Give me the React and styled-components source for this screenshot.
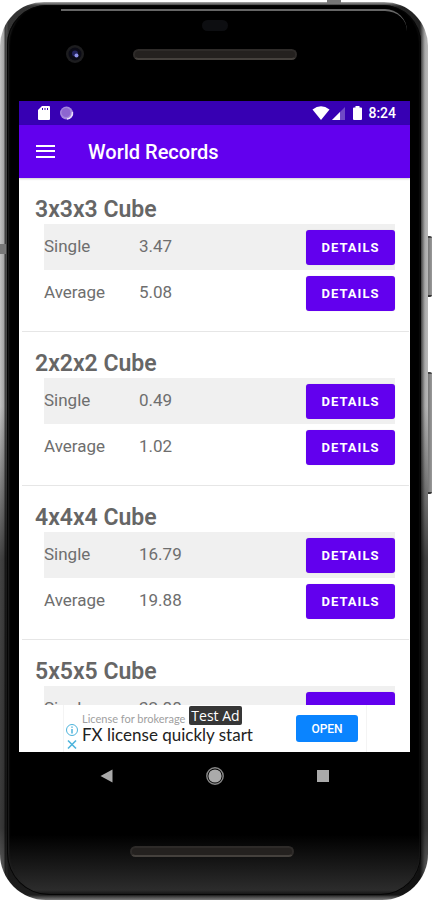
import React from 'react';
import styled, {createGlobalStyle} from 'styled-components';

const GlobalStyle = createGlobalStyle`
  * {
    box-sizing: border-box;
  }
  body {
    margin: 0;
    background-color: white;
    font-family: Roboto, "Liberation Sans", sans-serif;
  }
`

const Stage = styled.div`
  display: flex;
  height: 100vh;
  padding: 2px 4px 0 0;
`

const Phone = styled.div`
  position: relative;
  flex: 1;
  min-width: 0;
  display: flex;
  flex-direction: column;
  padding: 3px 7px 5px;
  border-radius: 44px 44px 46px 46px;
  background:
    linear-gradient(to bottom, #a8a8a8 0, #444 3px, transparent 5px, transparent calc(100% - 5px), #333 calc(100% - 4px), #7c7c7c 100%),
    linear-gradient(to bottom, transparent 45%, rgba(0, 0, 0, 0.65) 62%, rgba(0, 0, 0, 0.7) 92%, rgba(0, 0, 0, 0.4) 100%),
    linear-gradient(to right, #c2c2c2 0, #a6a6a6 4px, #3a3a3a 5px, #4e4e4e 7px, #333 8px, #222 calc(100% - 8px), #777 calc(100% - 5px), #a9a9a9 calc(100% - 3px), #b8b8b8 100%);
`

const SideKey = styled.span`
  position: absolute;
  left: 100%;
  top: ${({$top}) => $top}px;
  width: 4px;
  height: ${({$height}) => $height}px;
  background: linear-gradient(to right, #777, #999);
  border-top: 2px solid #444;
  border-bottom: 2px solid #333;
  border-radius: 0 2px 2px 0;
`

const Antenna = styled.span`
  position: absolute;
  top: ${({$top}) => $top}px;
  left: ${({$left}) => $left};
  right: ${({$right}) => $right};
  width: ${({$wide}) => $wide ? 14 : 6}px;
  height: ${({$wide}) => $wide ? 4 : 10}px;
  background-color: #777;
`

const Face = styled.div`
  position: relative;
  flex: 1;
  min-height: 0;
  display: flex;
  flex-direction: column;
  padding: 0 11px 0 12px;
  border-radius: 40px 38px 40px 42px;
  background: linear-gradient(to bottom, black calc(100% - 60px), #2c2c2c calc(100% - 5px), #111 100%);
  box-shadow: inset 0 0 0 1px #050505, inset 5px 0 2px -3px #222, inset -4px 0 2px -3px #222;

  &::before {
    content: '';
    position: absolute;
    top: 4px;
    left: 54px;
    right: 14px;
    height: 20px;
    border-top: 2px solid #666;
    border-radius: 0 28px 0 0;
  }
`

const TopBezel = styled.div`
  flex: none;
  height: 96px;
  padding-top: 15px;
`

const Sensor = styled.div`
  width: 26px;
  height: 11px;
  margin: 0 auto 13px;
  border-radius: 6px;
  background-color: #0d0e11;
`

const BezelRow = styled.div`
  display: grid;
  grid-template-columns: 1fr auto 1fr;
  align-items: center;
`

const Camera = styled.svg`
  width: 20px;
  height: 20px;
  margin-left: 46px;
`

const Speaker = styled.div`
  width: 164px;
  height: 11px;
  border: 2px solid #2e2b29;
  border-bottom-color: #45413d;
  border-radius: 6px;
  background-color: #24211f;
`

const BottomBezel = styled.div`
  flex: none;
  height: 95px;
  padding: 46px 5px 0 0;
  display: flex;
  justify-content: center;
`

const Screen = styled.div`
  flex: 1;
  min-height: 0;
  display: flex;
  flex-direction: column;
  background-color: white;
`

const StatusBar = styled.div`
  flex: none;
  display: flex;
  align-items: center;
  height: 24px;
  padding: 0 14px 0 18px;
  background-color: #3700b3;
  color: white;
  font-size: 14px;
  font-weight: 500;
`

const StatusIcon = styled.svg`
  flex: none;
  display: block;
  width: ${({$width}) => $width}px;
  height: 16px;
  margin-right: ${({$gap}) => $gap || 0}px;
`

const Spacer = styled.div`
  flex: 1;
`

const AppBar = styled.header`
  position: relative;
  flex: none;
  display: flex;
  align-items: center;
  height: 53px;
  padding-left: 14px;
  background-color: #6200ee;
  color: white;
  box-shadow: 0 1px 2px rgba(0, 0, 0, 0.2);
`

const MenuButton = styled.button`
  display: flex;
  margin-right: 30px;
  padding: 0;
  border: 0;
  background: none;
  color: white;
`

const Title = styled.h1`
  margin: 0;
  font-size: 20px;
  font-weight: 500;
`

const List = styled.main`
  flex: 1;
  min-height: 0;
  overflow: hidden;
`

const Section = styled.section`
  margin: 0 1px 0 3px;
  padding: 18px 14px 15px 13px;
  border-bottom: 1px solid #e6e6e6;
`

const Event = styled.h2`
  margin: 0;
  font-size: 23px;
  line-height: 28px;
  font-weight: 600;
  color: #666;
`

const Records = styled.table`
  width: calc(100% - 9px);
  margin-left: 9px;
  border-collapse: collapse;
  font-size: 17px;
  line-height: 20px;
  color: #6e6e6e;
`

const Record = styled.tr`
  height: 46px;
  background-color: ${({$shaded}) => $shaded ? '#f0f0f0' : 'transparent'};
`

const Kind = styled.th`
  width: 95px;
  padding: 0 0 2px;
  font-weight: 400;
  text-align: left;
`

const Value = styled.td`
  padding: 0 0 2px;
`

const Action = styled.td`
  padding: 0;
  text-align: right;
`

const DetailsButton = styled.button`
  display: block;
  width: 89px;
  height: 35px;
  margin-left: auto;
  padding: 0;
  border: 0;
  border-radius: 3px;
  background-color: #6200ee;
  color: white;
  font-family: inherit;
  font-size: 13px;
  font-weight: 700;
  letter-spacing: 1px;
  box-shadow: 0 0 1px rgba(0, 0, 0, 0.2);
`

const AdBar = styled.aside`
  flex: none;
  height: 47px;
  padding: 0 43px 0 44px;
  background-color: white;
`

const Ad = styled.div`
  display: flex;
  align-items: center;
  height: 100%;
  padding-right: 8px;
  border: 1px solid #f4f4f4;
  border-width: 0 1px;
`

const AdChoices = styled.div`
  align-self: flex-end;
  display: flex;
  flex-direction: column;
  flex: none;
  width: 18px;
  padding-left: 1px;
`

const AdText = styled.div`
  flex: 1;
  min-width: 0;
  align-self: flex-start;
  white-space: nowrap;
  font-family: Lato, "Liberation Sans", sans-serif;
`

const AdTop = styled.div`
  display: flex;
  align-items: flex-end;
  gap: 4px;
  padding-top: 1px;
`

const AdLead = styled.span`
  font-size: 11px;
  line-height: 12px;
  color: #a0a0a0;
`

const AdTag = styled.span`
  padding: 0 2px;
  border-radius: 2px;
  background-color: #363636;
  color: white;
  font-family: "Open Sans", sans-serif;
  font-size: 14px;
  line-height: 19px;
`

const AdHeadline = styled.div`
  font-size: 17px;
  line-height: 20px;
  color: #222;
`

const OpenButton = styled.button`
  flex: none;
  width: 62px;
  height: 27px;
  padding: 0;
  border: 0;
  border-radius: 3px;
  background-color: #0a84ff;
  color: white;
  font-family: Roboto, sans-serif;
  font-size: 12px;
  font-weight: 500;
`

const NavBar = styled.nav`
  flex: none;
  display: grid;
  grid-template-columns: repeat(3, 1fr);
  height: 48px;
  padding: 0 33px 0 34px;
  background-color: black;
`

const NavButton = styled.button`
  display: flex;
  align-items: center;
  justify-content: center;
  padding: 0;
  border: 0;
  background: none;
`

const events = [
    {name: '3x3x3 Cube', single: '3.47', average: '5.08'},
    {name: '2x2x2 Cube', single: '0.49', average: '1.02'},
    {name: '4x4x4 Cube', single: '16.79', average: '19.88'},
    {name: '5x5x5 Cube', single: '32.88', average: '39.65'},
]

const RecordRow = ({kind, value, shaded}) => (
    <Record $shaded={shaded}>
        <Kind scope="row">{kind}</Kind>
        <Value>{value}</Value>
        <Action><DetailsButton type="button">DETAILS</DetailsButton></Action>
    </Record>
)

const Status = () => (
    <StatusBar>
        <StatusIcon $width={14} $gap={8} viewBox="0 0 14 16">
            <path d="M5 1h7q1 0 1 1v12q0 1-1 1H2q-1 0-1-1V5z" fill="#fff"/>
            <path d="M5.5 3v2M8 3v2M10.5 3v2" stroke="#3700b3"/>
        </StatusIcon>
        <StatusIcon $width={16} viewBox="0 0 16 16">
            <circle cx="7.5" cy="8" r="6.5" fill="#a487dc"/>
            <circle cx="7" cy="7.5" r="4.5" fill="#8d66d0"/>
            <path d="M13.4 7a6 6 0 0 1-5.4 7" fill="none" stroke="#e8defa" strokeWidth="1.6"/>
        </StatusIcon>
        <Spacer/>
        <StatusIcon $width={18} $gap={2} viewBox="0 0 18 16">
            <path d="M9 15 0.5 4.5Q9-2 17.5 4.5z" fill="#fff"/>
        </StatusIcon>
        <StatusIcon $width={13} $gap={8} viewBox="0 0 13 16">
            <path d="M0 15 13 2v13z" fill="#6f49c6"/>
            <path d="M0 15 8 7v8z" fill="#fff"/>
        </StatusIcon>
        <StatusIcon $width={9} $gap={6} viewBox="0 0 9 16">
            <path d="M2.5 1h4v1.500H8q1 0 1 1V14q0 1-1 1H1q-1 0-1-1V3.500q0-1 1-1h1.500z" fill="#fff"/>
        </StatusIcon>
        <span>8:24</span>
    </StatusBar>
)

const AdBanner = () => (
    <AdBar>
        <Ad>
            <AdChoices>
                <svg width="14" height="15" viewBox="0 0 14 15" fill="none" stroke="#4db4dc">
                    <circle cx="7" cy="7" r="5.5"/>
                    <path d="M7 6v4.500M7 3.500v1.300" strokeWidth="1.5"/>
                </svg>
                <svg width="14" height="14" viewBox="0 0 14 14" fill="none" stroke="#4db4dc" strokeWidth="1.6">
                    <path d="m3 2.500 8 8m0-8-8 8"/>
                </svg>
            </AdChoices>
            <AdText>
                <AdTop>
                    <AdLead>License for brokerage</AdLead>
                    <AdTag>Test Ad</AdTag>
                </AdTop>
                <AdHeadline>FX license quickly start</AdHeadline>
            </AdText>
            <OpenButton type="button">OPEN</OpenButton>
        </Ad>
    </AdBar>
)

const App = () => {
    return (
        <Stage>
            <GlobalStyle/>
            <Phone>
                <Antenna $wide $top={-2} $right="87px"/>
                <Antenna $top={242} $left="0"/>
                <SideKey $top={234} $height={61}/>
                <SideKey $top={370} $height={122}/>
                <Face>
                    <TopBezel>
                        <Sensor/>
                        <BezelRow>
                            <Camera viewBox="0 0 20 20">
                                <circle cx="10" cy="10" r="9" fill="#1d1d1f"/>
                                <circle cx="10" cy="10" r="6.5" fill="#0b0b16"/>
                                <circle cx="10" cy="9.5" r="3" fill="#23235e"/>
                                <circle cx="11.5" cy="11.5" r="2" fill="#8f93ea"/>
                            </Camera>
                            <Speaker/>
                        </BezelRow>
                    </TopBezel>
                    <Screen>
                        <Status/>
                        <AppBar>
                            <MenuButton type="button" aria-label="Menu">
                                <svg width="25" height="24" viewBox="0 0 25 24" stroke="#fff" strokeWidth="2">
                                    <path d="M3 6h19M3 11h19M3 17h19"/>
                                </svg>
                            </MenuButton>
                            <Title>World Records</Title>
                        </AppBar>
                        <List>
                            {events.map(({name, single, average}) => (
                                <Section key={name}>
                                    <Event>{name}</Event>
                                    <Records>
                                        <tbody>
                                            <RecordRow kind="Single" value={single} shaded/>
                                            <RecordRow kind="Average" value={average}/>
                                        </tbody>
                                    </Records>
                                </Section>
                            ))}
                        </List>
                        <AdBanner/>
                        <NavBar>
                            <NavButton type="button" aria-label="Back">
                                <svg width="14" height="14" viewBox="0 0 14 14">
                                    <path d="M0.5 7 12.500 0.500v13z" fill="#aaa"/>
                                </svg>
                            </NavButton>
                            <NavButton type="button" aria-label="Home">
                                <svg width="20" height="20" viewBox="0 0 20 20">
                                    <circle cx="10" cy="10" r="8.2" fill="none" stroke="#888" strokeWidth="1.4"/>
                                    <circle cx="10" cy="10" r="6.6" fill="#aaa"/>
                                </svg>
                            </NavButton>
                            <NavButton type="button" aria-label="Recent apps">
                                <svg width="14" height="14" viewBox="0 0 14 14">
                                    <rect x="1" y="1" width="12" height="12" fill="#aaa"/>
                                </svg>
                            </NavButton>
                        </NavBar>
                    </Screen>
                    <BottomBezel>
                        <Speaker/>
                    </BottomBezel>
                </Face>
            </Phone>
        </Stage>
    );
};

export default App;
